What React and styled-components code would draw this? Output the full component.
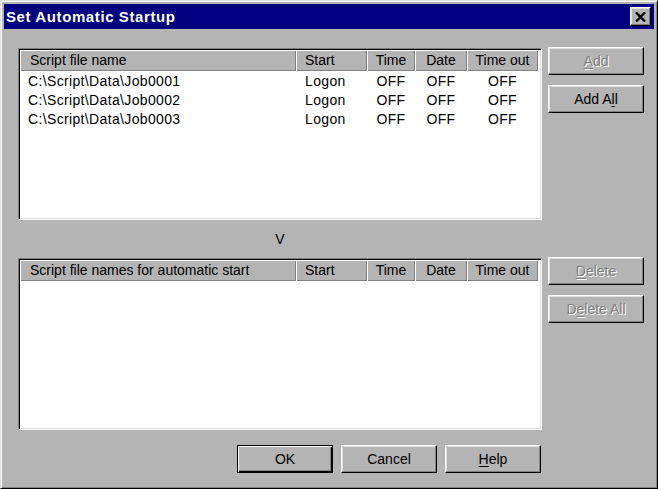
import React from 'react'
import styled, { createGlobalStyle } from 'styled-components'

const Global = createGlobalStyle`
  body {
    margin: 0;
    font-family: "Liberation Sans", Arial, sans-serif;
  }
  #root {
    width: 658px;
    height: 489px;
  }
`

const Window = styled.div`
  width: 658px;
  height: 489px;
  box-sizing: border-box;
  background: #b4b4b4;
  border: 1px solid;
  border-color: #dfdfdf #000 #000 #dfdfdf;
  box-shadow: inset 1px 1px #fff, inset -1px -1px #808080;
  padding: 3px;
  display: flex;
  flex-direction: column;
`

const TitleBar = styled.div`
  height: 25px;
  background: #000080;
  display: flex;
  align-items: center;
  justify-content: space-between;
  padding: 0 3px 0 2px;
  flex-shrink: 0;
`

const Title = styled.span`
  color: #fff;
  font-weight: bold;
  font-size: 15px;
  letter-spacing: 0.6px;
`

const CloseButton = styled.div`
  width: 21px;
  height: 19px;
  box-sizing: border-box;
  background: #b4b4b4;
  border: 1px solid;
  border-color: #fff #000 #000 #fff;
  box-shadow: inset -1px -1px #808080, inset 1px 1px #dfdfdf;
  display: flex;
  align-items: center;
  justify-content: center;
`

const Body = styled.div`
  display: flex;
  flex-direction: column;
  padding: 19px 0 0 14px;
`

const Section = styled.div`
  display: flex;
  gap: 6px;
  align-items: flex-start;
`

const ListBox = styled.div`
  width: 524px;
  height: 172px;
  box-sizing: border-box;
  background: #fff;
  border: 1px solid;
  border-color: #808080 #fff #fff #808080;
  box-shadow: inset 1px 1px #000, inset -1px -1px #dfdfdf;
  padding: 1px;
  overflow: hidden;
`

const Grid = styled.div`
  display: grid;
  grid-template-columns: 276px 71px 48px 52px 71px;
`

const HeadCell = styled.div`
  height: 21px;
  box-sizing: border-box;
  background: #b4b4b4;
  box-shadow: inset 1px 1px #fff, inset -1px -1px #808080;
  font-size: 14px;
  line-height: 21px;
  color: #000;
  white-space: nowrap;
  text-align: ${p => (p.$center ? 'center' : 'left')};
  padding-left: ${p => (p.$center ? 0 : p.$pad || 9)}px;
`

const Cell = styled.div`
  height: 19px;
  box-sizing: border-box;
  padding-top: 1px;
  font-size: 14px;
  line-height: 19px;
  letter-spacing: 0.35px;
  color: #000;
  white-space: nowrap;
  text-align: ${p => (p.$center ? 'center' : 'left')};
  padding-left: ${p => (p.$center ? 0 : p.$pad || 9)}px;
`

const ButtonCol = styled.div`
  display: flex;
  flex-direction: column;
  gap: 10px;
  margin-top: -1px;
`

const Button = styled.div`
  width: 96px;
  height: 28px;
  box-sizing: border-box;
  background: #b4b4b4;
  border: 1px solid;
  border-color: ${p => (p.$default ? '#000' : '#fff #000 #000 #fff')};
  box-shadow: ${p =>
    p.$default
      ? 'inset 1px 1px #fff, inset -1px -1px #000, inset -2px -2px #808080'
      : 'inset -1px -1px #808080, inset 1px 1px #dfdfdf'};
  font-size: 14px;
  display: flex;
  align-items: center;
  justify-content: center;
  color: ${p => (p.$disabled ? '#808080' : '#000')};
  text-shadow: ${p => (p.$disabled ? '1px 1px #fff' : 'none')};
  u {
    text-underline-offset: 2px;
  }
`

const Arrow = styled.div`
  width: 524px;
  height: 38px;
  display: flex;
  align-items: center;
  justify-content: center;
  font-size: 14px;
  color: #000;
`

const Footer = styled.div`
  width: 524px;
  display: flex;
  justify-content: flex-end;
  gap: 8px;
  margin-top: 15px;
  padding-right: 1px;
  box-sizing: border-box;
`

const rows = [
  'C:\\Script\\Data\\Job0001',
  'C:\\Script\\Data\\Job0002',
  'C:\\Script\\Data\\Job0003',
]

function Header({ first }) {
  return (
    <>
      <HeadCell $pad={10}>{first}</HeadCell>
      <HeadCell>Start</HeadCell>
      <HeadCell $center>Time</HeadCell>
      <HeadCell $center>Date</HeadCell>
      <HeadCell $center>Time out</HeadCell>
    </>
  )
}

export default function App() {
  return (
    <Window>
      <Global />
      <TitleBar>
        <Title>Set Automatic Startup</Title>
        <CloseButton>
          <svg width="11" height="10" viewBox="0 0 11 10">
            <path d="M1 0.5 L10 9.5 M10 0.5 L1 9.5" stroke="#000" strokeWidth="2.4" />
          </svg>
        </CloseButton>
      </TitleBar>
      <Body>
        <Section>
          <ListBox>
            <Grid>
              <Header first="Script file name" />
              {rows.map(r => (
                <React.Fragment key={r}>
                  <Cell $pad={8}>{r}</Cell>
                  <Cell>Logon</Cell>
                  <Cell $center>OFF</Cell>
                  <Cell $center>OFF</Cell>
                  <Cell $center>OFF</Cell>
                </React.Fragment>
              ))}
            </Grid>
          </ListBox>
          <ButtonCol>
            <Button $disabled><u>A</u>dd</Button>
            <Button>Add A<u>l</u>l</Button>
          </ButtonCol>
        </Section>
        <Arrow>V</Arrow>
        <Section>
          <ListBox>
            <Grid>
              <Header first="Script file names for automatic start" />
            </Grid>
          </ListBox>
          <ButtonCol>
            <Button $disabled><u>D</u>elete</Button>
            <Button $disabled>D<u>e</u>lete All</Button>
          </ButtonCol>
        </Section>
        <Footer>
          <Button $default>OK</Button>
          <Button>Cancel</Button>
          <Button><u>H</u>elp</Button>
        </Footer>
      </Body>
    </Window>
  )
}
